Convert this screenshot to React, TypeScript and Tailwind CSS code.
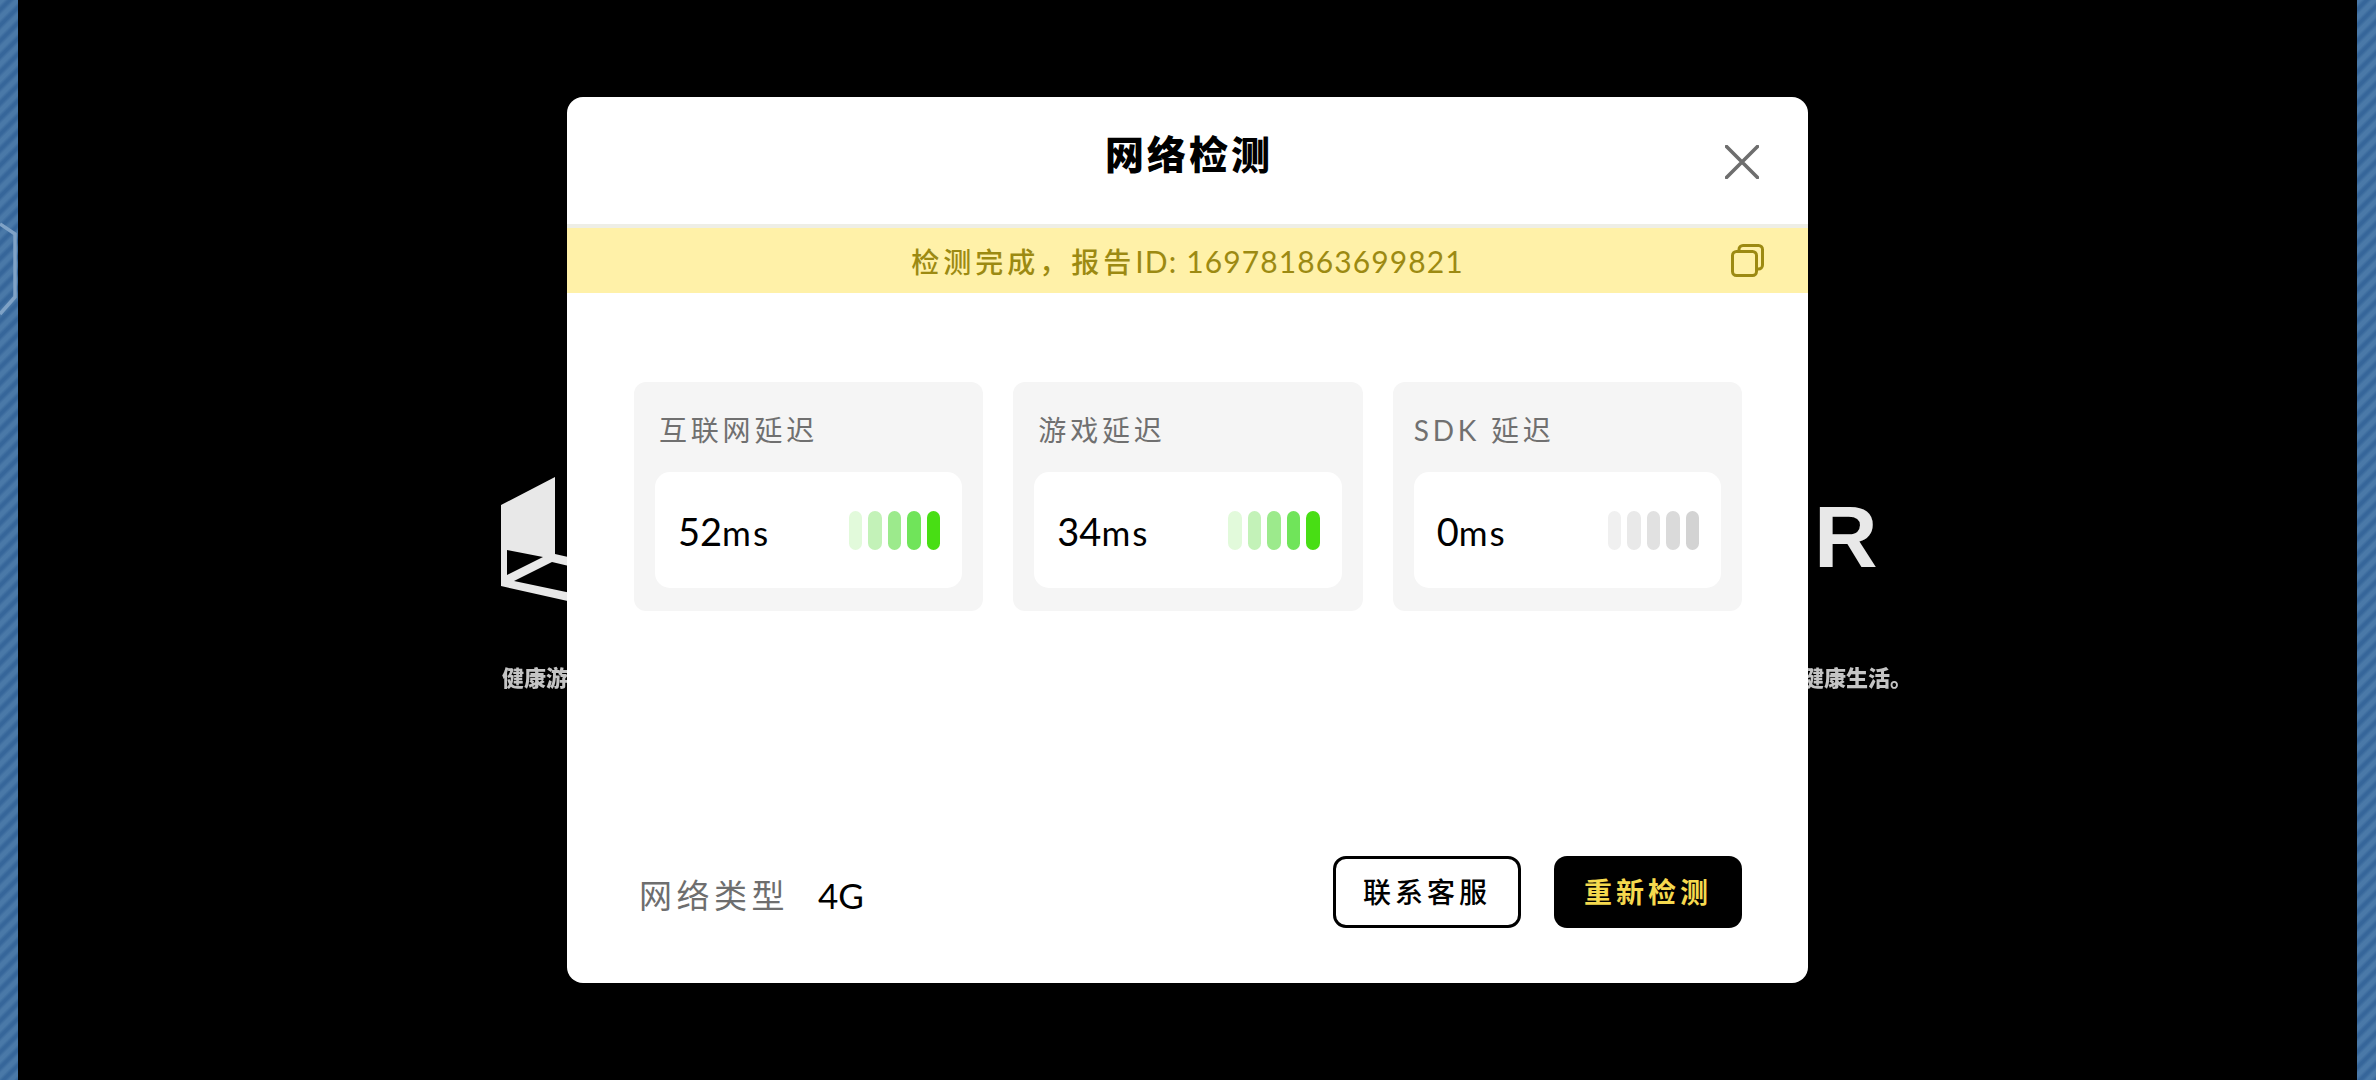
import React from "react";

const font = "font-['Lato','Noto_Sans_CJK_SC',sans-serif]";

function Strip({ className }: { className: string }) {
  return (
    <div
      className={
        "h-full shrink-0 bg-[repeating-linear-gradient(135deg,#4a79a8_0px,#4a79a8_3px,#36669a_6px,#36669a_8px,#4a79a8_11px)] " +
        className
      }
    />
  );
}

function Bars({ colors }: { colors: string[] }) {
  return (
    <div className="flex gap-[6px]">
      {colors.map((c, i) => (
        <div key={i} className={"h-[39px] w-[13.5px] rounded-full " + c} />
      ))}
    </div>
  );
}

const green = ["bg-[#e2fadb]", "bg-[#c3f2b8]", "bg-[#9cea8c]", "bg-[#70e45a]", "bg-[#48de14]"];
const grey = ["bg-[#f0f0f0]", "bg-[#e9e9e9]", "bg-[#e1e1e1]", "bg-[#dadada]", "bg-[#d3d3d3]"];

function Card({
  label,
  value,
  unit,
  colors,
  labelClass,
}: {
  label: string;
  value: string;
  unit: string;
  colors: string[];
  labelClass: string;
}) {
  return (
    <div className="flex h-[229px] flex-col rounded-[12px] bg-[#f5f5f5]">
      <div
        className={
          "flex h-[90px] items-center pt-[5px] text-[28px] leading-none tracking-[3.8px] text-[#707070] " + labelClass
        }
      >
        {label}
      </div>
      <div className="mx-[21px] flex h-[116px] items-center justify-between rounded-[15px] bg-white pl-[23px] pr-[22px]">
        <div className="mt-[2px] text-[38px] leading-none text-black">
          {value}
          <span className="text-[35px] tracking-[2px]">{unit}</span>
        </div>
        <Bars colors={colors} />
      </div>
    </div>
  );
}

export default function App() {
  return (
    <div className={"relative flex h-[1080px] w-[2376px] overflow-hidden bg-black " + font}>
      <Strip className="w-[18px]" />

      <svg className="absolute left-0 top-0" width="40" height="340" viewBox="0 0 40 340" fill="none">
        <path d="M0 224 L15 234 V297 L0 314" stroke="#7fa2c6" strokeWidth="3.5" />
      </svg>

      {/* dimmed page content behind the dialog */}
      <svg className="absolute left-[480px] top-[460px] blur-[0.7px]" width="110" height="160" viewBox="480 460 110 160">
        <path fill="#e8e8e8" d="M501 505 L555 477 V554 L590 562 V606 L501 586 Z" />
        <path fill="#000" d="M507 550 L543 557 L507 575 Z" />
        <path fill="#000" d="M514 581 L552 562 L590 571 V597 Z" />
      </svg>
      <div className="absolute left-[502px] top-[666px] text-[22px] font-black leading-[24px] text-[#c4c4c4] blur-[0.6px]">
        健康游
      </div>
      <div className="absolute left-[1814px] top-[493px] font-['Liberation_Sans',sans-serif] text-[88px] font-bold leading-[88px] text-[#e8e8e8] blur-[0.7px]">
        R
      </div>
      <div className="absolute left-[1802px] top-[666px] text-[22px] font-black leading-[24px] text-[#c4c4c4] blur-[0.6px]">
        健康生活。
      </div>

      <main className="relative flex flex-1 items-start justify-center pt-[97px]">
        <div className="flex h-[886px] w-[1241px] flex-col overflow-hidden rounded-[16px] bg-white">
          <header className="grid h-[131px] shrink-0 grid-cols-[1fr_auto_1fr] items-center border-b-4 border-[#eeeee6] pb-[12px]">
            <div />
            <h1 className="pl-[3px] text-[39px] font-black leading-none tracking-[3px] text-black">网络检测</h1>
            <svg className="mr-[49px] mt-[14px] justify-self-end" width="34" height="34" viewBox="0 0 34 34" fill="none">
              <path d="M1.5 1.5 L32.5 32.5 M32.5 1.5 L1.5 32.5" stroke="#6e6e6e" strokeWidth="3.6" strokeLinecap="round" />
            </svg>
          </header>

          <div className="grid h-[65px] shrink-0 grid-cols-[1fr_auto_1fr] items-center bg-[#fff1a8]">
            <div />
            <div className="text-[28px] leading-none text-[#9c8a12]">
              <span className="font-medium tracking-[4px]">检测完成，报告</span>
              <span className="text-[30px] tracking-[1.1px]">ID: 169781863699821</span>
            </div>
            <svg className="mr-[44px] justify-self-end" width="33" height="33" viewBox="0 0 33 33" fill="none">
              <rect x="1.5" y="7.5" width="24" height="24" rx="4" stroke="#9c8a12" strokeWidth="3" />
              <path d="M8 7.5 V5.5 A4 4 0 0 1 12 1.5 H27.5 A4 4 0 0 1 31.5 5.5 V21 A4 4 0 0 1 27.5 25 H25.5" stroke="#9c8a12" strokeWidth="3" />
            </svg>
          </div>

          <section className="mt-[89px] grid grid-cols-3 gap-[30px] pl-[67px] pr-[66px]">
            <Card label="互联网延迟" value="52" unit="ms" colors={green} labelClass="pl-[25px]" />
            <Card label="游戏延迟" value="34" unit="ms" colors={green} labelClass="pl-[25px]" />
            <Card label="SDK 延迟" value="0" unit="ms" colors={grey} labelClass="pl-[21px]" />
          </section>

          <footer className="mt-auto flex items-center justify-between pb-[55px] pl-[72px] pr-[66px]">
            <div className="mt-[7px] flex items-center gap-[29px]">
              <span className="text-[33px] leading-none tracking-[4.5px] text-[#6e6e6e]">网络类型</span>
              <span className="text-[35px] leading-none text-black">4G</span>
            </div>
            <div className="flex gap-[33px]">
              <button className="h-[72px] w-[188px] rounded-[13px] border-[3px] border-black bg-white text-[28px] font-medium tracking-[4px] text-black">
                联系客服
              </button>
              <button className="h-[72px] w-[188px] rounded-[13px] bg-black text-[28px] font-bold tracking-[4px] text-[#f5d94e]">
                重新检测
              </button>
            </div>
          </footer>
        </div>
      </main>

      <Strip className="w-[19px]" />
    </div>
  );
}
